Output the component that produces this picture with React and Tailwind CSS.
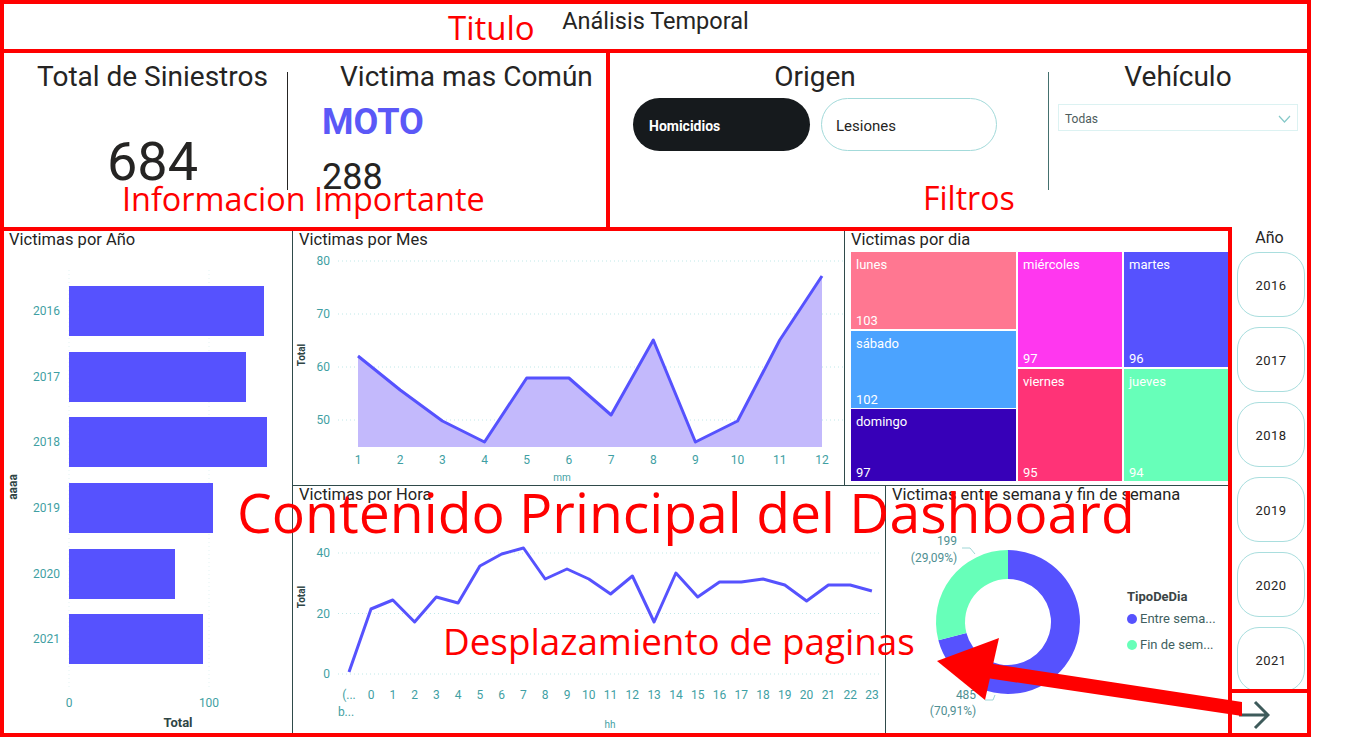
import React from "react";

const mesY = [356, 390, 421, 442, 378, 378, 415, 340, 442, 421, 340, 276];
const horaY = [103, 94, 116, 91, 97, 60, 48, 42, 73, 63, 73, 88, 70, 116, 67, 91, 76, 76, 73, 79, 95, 79, 79, 85];

function BarChart() {
  const bars = [
    ["2016", 36, 195],
    ["2017", 102, 177],
    ["2018", 167, 198],
    ["2019", 233, 144],
    ["2020", 299, 106],
    ["2021", 364, 134],
  ];
  return (
    <svg width="288" height="483" className="block">
      <line x1="65" y1="20" x2="65" y2="440" stroke="#e3f3f3" strokeDasharray="1 3" />
      <line x1="205" y1="20" x2="205" y2="440" stroke="#e3f3f3" strokeDasharray="1 3" />
      {bars.map(([y, top, w]) => (
        <g key={y}>
          <rect x="65" y={top} width={w} height="50" fill="#5652fe" />
          <text x="56" y={top + 29} textAnchor="end" fontSize="12" fill="#3f9fa3">
            {y}
          </text>
        </g>
      ))}
      <text x="65" y="457" textAnchor="middle" fontSize="12" fill="#3f9fa3">0</text>
      <text x="205" y="457" textAnchor="middle" fontSize="12" fill="#3f9fa3">100</text>
      <text x="174" y="477" textAnchor="middle" fontSize="13" fontWeight="700" fill="#2f4545">Total</text>
      <text x="13" y="237" textAnchor="middle" fontSize="12" fontWeight="700" fill="#2f4545" transform="rotate(-90 13 237)">aaaa</text>
    </svg>
  );
}

function MesChart() {
  const xs = mesY.map((_, i) => 65 + i * 42.18);
  const ys = mesY.map((y) => y - 251);
  const line = xs.map((x, i) => `${i === 0 ? "M" : "L"}${x.toFixed(1)} ${ys[i]}`).join(" ");
  const area = `${line} L${xs[11].toFixed(1)} 196 L${xs[0]} 196 Z`;
  const grid = [
    ["80", 10],
    ["70", 63],
    ["60", 116],
    ["50", 169],
  ];
  return (
    <svg width="551" height="234" className="block">
      {grid.map(([l, y]) => (
        <g key={l}>
          <line x1="45" y1={y} x2="550" y2={y} stroke="#bfe8e8" strokeDasharray="1 3" />
          <text x="37" y={y + 4} textAnchor="end" fontSize="12" fill="#3f9fa3">{l}</text>
        </g>
      ))}
      <path d={area} fill="#c3b9fc" />
      <path d={line} fill="none" stroke="#5652fe" strokeWidth="3" strokeLinejoin="round" />
      {xs.map((x, i) => (
        <text key={i} x={x} y="213" textAnchor="middle" fontSize="12" fill="#3f9fa3">{i + 1}</text>
      ))}
      <text x="269" y="230" textAnchor="middle" fontSize="10" fill="#3f9fa3">mm</text>
      <text x="12" y="104" textAnchor="middle" fontSize="10" fontWeight="700" fill="#2f4545" transform="rotate(-90 12 104)">Total</text>
    </svg>
  );
}

function Treemap() {
  const cells = [
    ["lunes", "103", 6, 1, 165, 77, "#ff7791"],
    ["sábado", "102", 6, 80, 165, 77, "#4ba3ff"],
    ["domingo", "97", 6, 158, 165, 72, "#3700b8"],
    ["miércoles", "97", 173, 1, 104, 115, "#ff37ef"],
    ["viernes", "95", 173, 118, 104, 112, "#ff3377"],
    ["martes", "96", 279, 1, 104, 115, "#5652fe"],
    ["jueves", "94", 279, 118, 104, 112, "#67ffb9"],
  ];
  return (
    <svg width="383" height="234" className="block">
      {cells.map(([n, v, x, y, w, h, c]) => (
        <g key={n}>
          <rect x={x} y={y} width={w} height={h} fill={c} />
          <text x={x + 5} y={y + 17} fontSize="13" fill="#ffffff">{n}</text>
          <text x={x + 5} y={y + h - 4} fontSize="13" fill="#ffffff">{v}</text>
        </g>
      ))}
    </svg>
  );
}

function HoraChart() {
  const xs = horaY.map((_, i) => 78 + i * 21.78);
  const pts = [[56, 166], ...xs.map((x, i) => [x, horaY[i]])];
  const line = pts.map(([x, y], i) => `${i === 0 ? "M" : "L"}${x.toFixed(1)} ${y}`).join(" ");
  const grid = [
    ["40", 47],
    ["20", 107.5],
    ["0", 168],
  ];
  return (
    <svg width="592" height="227" className="block">
      {grid.map(([l, y]) => (
        <g key={l}>
          <line x1="45" y1={y} x2="588" y2={y} stroke="#bfe8e8" strokeDasharray="1 3" />
          <text x="37" y={y + 4} textAnchor="end" fontSize="12" fill="#3f9fa3">{l}</text>
        </g>
      ))}
      <path d={line} fill="none" stroke="#5652fe" strokeWidth="3" strokeLinejoin="round" />
      <text x="56" y="193" textAnchor="middle" fontSize="12" fill="#3f9fa3">(...</text>
      <text x="53" y="210" textAnchor="middle" fontSize="12" fill="#3f9fa3">b...</text>
      {xs.map((x, i) => (
        <text key={i} x={x} y="193" textAnchor="middle" fontSize="12" fill="#3f9fa3">{i}</text>
      ))}
      <text x="317" y="222" textAnchor="middle" fontSize="10" fill="#3f9fa3">hh</text>
      <text x="12" y="91" textAnchor="middle" fontSize="10" fontWeight="700" fill="#2f4545" transform="rotate(-90 12 91)">Total</text>
    </svg>
  );
}

function Donut() {
  return (
    <svg width="342" height="227" className="block">
      <path d="M122 44 A72 72 0 1 1 52.36 134.3 L80.41 126.93 A43 43 0 1 0 122 73 Z" fill="#5652fe" />
      <path d="M52.36 134.3 A72 72 0 0 1 122 44 L122 73 A43 43 0 0 0 80.41 126.93 Z" fill="#67ffb9" />
      <polyline points="76,42 84,42 89,48" fill="none" stroke="#9fd6d6" strokeWidth="1" />
      <polyline points="99,194 107,194 109,189" fill="none" stroke="#9fd6d6" strokeWidth="1" />
      <text x="61" y="39" textAnchor="middle" fontSize="12" fill="#4f8f92">199</text>
      <text x="48" y="56" textAnchor="middle" fontSize="12" fill="#4f8f92">(29,09%)</text>
      <text x="80" y="193" textAnchor="middle" fontSize="12" fill="#4f8f92">485</text>
      <text x="67" y="209" textAnchor="middle" fontSize="12" fill="#4f8f92">(70,91%)</text>
      <text x="241" y="95" fontSize="13" fontWeight="700" fill="#3b4545">TipoDeDia</text>
      <circle cx="246" cy="113" r="5" fill="#5652fe" />
      <text x="254" y="117" fontSize="13" fill="#3f5f5f">Entre sema...</text>
      <circle cx="246" cy="139" r="5" fill="#67ffb9" />
      <text x="254" y="143" fontSize="13" fill="#3f5f5f">Fin de sem...</text>
    </svg>
  );
}

export default function App() {
  const years = ["2016", "2017", "2018", "2019", "2020", "2021"];
  return (
    <div className="relative w-[1366px] h-[737px] overflow-hidden bg-white font-[Roboto,sans-serif] text-[#252423]">
      <div className="flex w-[1311px] flex-col">
        {/* Title */}
        <div className="flex h-[53px] justify-center border-4 border-[#ff0000]">
          <div className="pt-[6px] text-[23.5px] leading-none">Análisis Temporal</div>
        </div>

        {/* Row A */}
        <div className="flex h-[174px]">
          <div className="flex w-[610px] border-x-4 border-[#ff0000]">
            <div className="flex w-[283px] flex-col items-center pl-[14px] pt-[10px]">
              <div className="text-[28px] leading-none">Total de Siniestros</div>
              <div className="mt-[44px] text-[54px] leading-none">684</div>
            </div>
            <div className="mt-[19px] h-[118px] w-px bg-[#252423]"></div>
            <div className="flex flex-col items-start pl-[34px] pt-[10px]">
              <div className="ml-[18px] text-[28px] leading-none">Victima mas Común</div>
              <div className="mt-[13px] text-[36px] font-bold leading-none text-[#5b58f7]">MOTO</div>
              <div className="mt-[19px] text-[36px] leading-none">288</div>
            </div>
          </div>
          <div className="flex flex-1 border-r-4 border-[#ff0000]">
            <div className="flex flex-col items-center pl-[23px] pt-[10px]">
              <div className="text-[28px] leading-none">Origen</div>
              <div className="mt-[7px] flex gap-[11px]">
                <div className="flex h-[53px] w-[177px] items-center rounded-full bg-[#161a1d] pl-[16px] pt-[4px] text-[14px] font-bold text-white">
                  Homicidios
                </div>
                <div className="flex h-[53px] w-[176px] items-center rounded-full border border-[#a3dada] pl-[14px] pt-[4px] text-[15px] text-[#252423]">
                  Lesiones
                </div>
              </div>
            </div>
            <div className="ml-[51px] mt-[19px] h-[118px] w-px bg-[#44706e]"></div>
            <div className="ml-[9px] flex w-[240px] flex-col items-center pt-[10px]">
              <div className="text-[28px] leading-none">Vehículo</div>
              <div className="mt-[13px] flex h-[27px] w-full items-center justify-between border border-[#dcf2f2] pl-[6px] pr-[6px] pt-[2px]">
                <span className="text-[12px] text-[#4d5c5c]">Todas</span>
                <svg width="13" height="8" viewBox="0 0 13 8">
                  <polyline points="1,1 6.5,7 12,1" fill="none" stroke="#86c9c9" strokeWidth="1.2" />
                </svg>
              </div>
            </div>
          </div>
        </div>

        {/* Row B */}
        <div className="flex h-[510px]">
          <div className="flex w-[1232px] border-4 border-[#ff0000]">
            <div className="flex w-[289px] flex-col border-r border-[#2f4a4a]">
              <div className="h-[19px] pl-[5px] pt-[1px] text-[16.5px] leading-none">Victimas por Año</div>
              <BarChart />
            </div>
            <div className="flex flex-1 flex-col">
              <div className="flex h-[255px] border-b border-[#2f4a4a]">
                <div className="flex w-[552px] flex-col border-r border-[#2f4a4a]">
                  <div className="h-[20px] pl-[6px] pt-[1px] text-[16.5px] leading-none">Victimas por Mes</div>
                  <MesChart />
                </div>
                <div className="flex flex-1 flex-col">
                  <div className="h-[20px] pl-[6px] pt-[1px] text-[16.5px] leading-none">Victimas por dia</div>
                  <Treemap />
                </div>
              </div>
              <div className="flex flex-1">
                <div className="flex w-[593px] flex-col border-r border-[#2f4a4a]">
                  <div className="h-[20px] pl-[6px] pt-[1px] text-[16.5px] leading-none">Victimas por Hora</div>
                  <HoraChart />
                </div>
                <div className="flex flex-1 flex-col">
                  <div className="h-[20px] pl-[6px] pt-[1px] text-[16.5px] leading-none">Victimas entre semana y fin de semana</div>
                  <Donut />
                </div>
              </div>
            </div>
          </div>
          <div className="flex w-[79px] flex-col border-b-4 border-r-4 border-[#ff0000]">
            <div className="flex h-[462px] flex-col overflow-hidden">
              <div className="pt-[3px] text-center text-[16px] leading-none">Año</div>
              <div className="ml-[5px] mt-[6px] flex flex-col gap-[10px]">
                {years.map((y) => (
                  <div
                    key={y}
                    className="flex h-[65px] w-[68px] shrink-0 items-center justify-center rounded-[22px] border border-[#a9dede] pt-[2px] text-[13px] tracking-[0.5px]"
                  >
                    {y}
                  </div>
                ))}
              </div>
            </div>
            <div className="flex-1 border-t-4 border-[#ff0000] pl-[6px] pt-[7px]">
              <svg width="32" height="30" viewBox="0 0 32 30">
                <path d="M1 15 H30 M17 2 L30 15 L17 28" fill="none" stroke="#3e5b5b" strokeWidth="3" />
              </svg>
            </div>
          </div>
        </div>
      </div>

      {/* Annotations */}
      <div className="absolute left-[448px] top-[11px] font-['Open_Sans',sans-serif] text-[33px] leading-none text-[#ff0000]">Titulo</div>
      <div className="absolute left-[122px] top-[182px] font-['Open_Sans',sans-serif] text-[32.4px] leading-none text-[#ff0000]">Informacion Importante</div>
      <div className="absolute left-[923px] top-[182px] font-['Open_Sans',sans-serif] text-[32px] leading-none text-[#ff0000]">Filtros</div>
      <div className="absolute left-[237px] top-[484px] font-['Open_Sans',sans-serif] text-[55.3px] leading-none text-[#ff0000]">Contenido Principal del Dashboard</div>
      <div className="absolute left-[443px] top-[623px] font-['Open_Sans',sans-serif] text-[36.8px] leading-none text-[#ff0000]">Desplazamiento de paginas</div>
      <svg className="absolute left-0 top-0" width="1366" height="737">
        <polygon points="980,662 1242,702 1242,716 980,677" fill="#ff0000" />
        <polygon points="937,661 999,638 985,700" fill="#ff0000" />
      </svg>
    </div>
  );
}
